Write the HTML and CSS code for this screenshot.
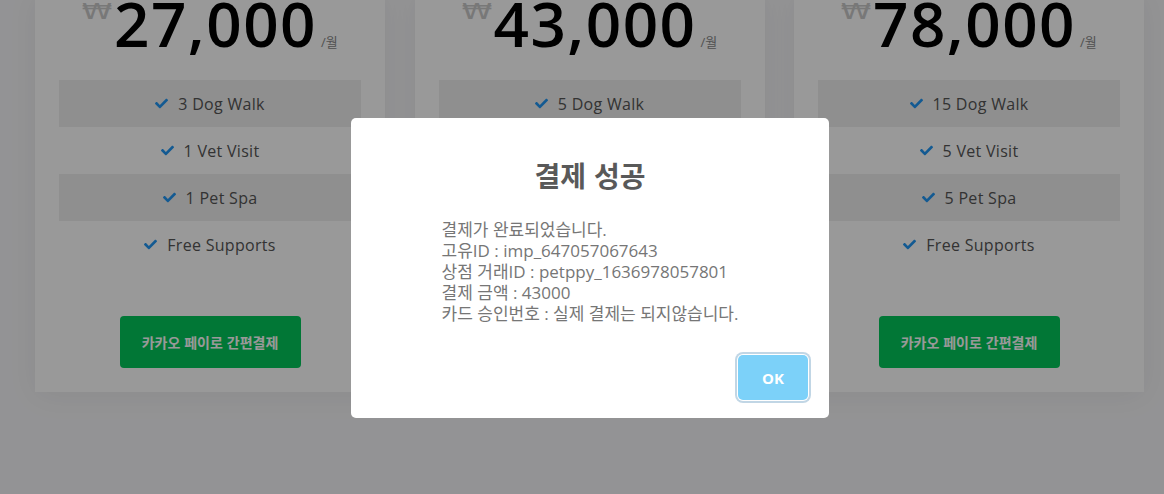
FILE: index.html
```html
<!DOCTYPE html>
<html lang="ko">
<head>
<meta charset="utf-8">
<title>요금제</title>
<link rel="stylesheet" href="styles.css">
</head>
<body>
<main class="pricing">
  <section class="card">
    <div class="price"><span class="won">₩</span><span class="amount">27,000</span><span class="per">/월</span></div>
    <ul class="features">
      <li><svg class="check" viewBox="0 0 512 512"><path d="M173.9 439.4l-166.4-166.4c-10-10-10-26.2 0-36.2l36.2-36.2c10-10 26.2-10 36.2 0L192 312.7 432.1 72.6c10-10 26.2-10 36.2 0l36.2 36.2c10 10 10 26.2 0 36.2l-294.4 294.4c-10 10-26.2 10-36.2 0z"/></svg>3 Dog Walk</li>
      <li><svg class="check" viewBox="0 0 512 512"><path d="M173.9 439.4l-166.4-166.4c-10-10-10-26.2 0-36.2l36.2-36.2c10-10 26.2-10 36.2 0L192 312.7 432.1 72.6c10-10 26.2-10 36.2 0l36.2 36.2c10 10 10 26.2 0 36.2l-294.4 294.4c-10 10-26.2 10-36.2 0z"/></svg>1 Vet Visit</li>
      <li><svg class="check" viewBox="0 0 512 512"><path d="M173.9 439.4l-166.4-166.4c-10-10-10-26.2 0-36.2l36.2-36.2c10-10 26.2-10 36.2 0L192 312.7 432.1 72.6c10-10 26.2-10 36.2 0l36.2 36.2c10 10 10 26.2 0 36.2l-294.4 294.4c-10 10-26.2 10-36.2 0z"/></svg>1 Pet Spa</li>
      <li><svg class="check" viewBox="0 0 512 512"><path d="M173.9 439.4l-166.4-166.4c-10-10-10-26.2 0-36.2l36.2-36.2c10-10 26.2-10 36.2 0L192 312.7 432.1 72.6c10-10 26.2-10 36.2 0l36.2 36.2c10 10 10 26.2 0 36.2l-294.4 294.4c-10 10-26.2 10-36.2 0z"/></svg>Free Supports</li>
    </ul>
    <div class="cta"><button class="kakao">카카오 페이로 간편결제</button></div>
  </section>
  <section class="card">
    <div class="price"><span class="won">₩</span><span class="amount">43,000</span><span class="per">/월</span></div>
    <ul class="features">
      <li><svg class="check" viewBox="0 0 512 512"><path d="M173.9 439.4l-166.4-166.4c-10-10-10-26.2 0-36.2l36.2-36.2c10-10 26.2-10 36.2 0L192 312.7 432.1 72.6c10-10 26.2-10 36.2 0l36.2 36.2c10 10 10 26.2 0 36.2l-294.4 294.4c-10 10-26.2 10-36.2 0z"/></svg>5 Dog Walk</li>
      <li><svg class="check" viewBox="0 0 512 512"><path d="M173.9 439.4l-166.4-166.4c-10-10-10-26.2 0-36.2l36.2-36.2c10-10 26.2-10 36.2 0L192 312.7 432.1 72.6c10-10 26.2-10 36.2 0l36.2 36.2c10 10 10 26.2 0 36.2l-294.4 294.4c-10 10-26.2 10-36.2 0z"/></svg>3 Vet Visit</li>
      <li><svg class="check" viewBox="0 0 512 512"><path d="M173.9 439.4l-166.4-166.4c-10-10-10-26.2 0-36.2l36.2-36.2c10-10 26.2-10 36.2 0L192 312.7 432.1 72.6c10-10 26.2-10 36.2 0l36.2 36.2c10 10 10 26.2 0 36.2l-294.4 294.4c-10 10-26.2 10-36.2 0z"/></svg>3 Pet Spa</li>
      <li><svg class="check" viewBox="0 0 512 512"><path d="M173.9 439.4l-166.4-166.4c-10-10-10-26.2 0-36.2l36.2-36.2c10-10 26.2-10 36.2 0L192 312.7 432.1 72.6c10-10 26.2-10 36.2 0l36.2 36.2c10 10 10 26.2 0 36.2l-294.4 294.4c-10 10-26.2 10-36.2 0z"/></svg>Free Supports</li>
    </ul>
    <div class="cta"><button class="kakao">카카오 페이로 간편결제</button></div>
  </section>
  <section class="card">
    <div class="price"><span class="won">₩</span><span class="amount">78,000</span><span class="per">/월</span></div>
    <ul class="features">
      <li><svg class="check" viewBox="0 0 512 512"><path d="M173.9 439.4l-166.4-166.4c-10-10-10-26.2 0-36.2l36.2-36.2c10-10 26.2-10 36.2 0L192 312.7 432.1 72.6c10-10 26.2-10 36.2 0l36.2 36.2c10 10 10 26.2 0 36.2l-294.4 294.4c-10 10-26.2 10-36.2 0z"/></svg>15 Dog Walk</li>
      <li><svg class="check" viewBox="0 0 512 512"><path d="M173.9 439.4l-166.4-166.4c-10-10-10-26.2 0-36.2l36.2-36.2c10-10 26.2-10 36.2 0L192 312.7 432.1 72.6c10-10 26.2-10 36.2 0l36.2 36.2c10 10 10 26.2 0 36.2l-294.4 294.4c-10 10-26.2 10-36.2 0z"/></svg>5 Vet Visit</li>
      <li><svg class="check" viewBox="0 0 512 512"><path d="M173.9 439.4l-166.4-166.4c-10-10-10-26.2 0-36.2l36.2-36.2c10-10 26.2-10 36.2 0L192 312.7 432.1 72.6c10-10 26.2-10 36.2 0l36.2 36.2c10 10 10 26.2 0 36.2l-294.4 294.4c-10 10-26.2 10-36.2 0z"/></svg>5 Pet Spa</li>
      <li><svg class="check" viewBox="0 0 512 512"><path d="M173.9 439.4l-166.4-166.4c-10-10-10-26.2 0-36.2l36.2-36.2c10-10 26.2-10 36.2 0L192 312.7 432.1 72.6c10-10 26.2-10 36.2 0l36.2 36.2c10 10 10 26.2 0 36.2l-294.4 294.4c-10 10-26.2 10-36.2 0z"/></svg>Free Supports</li>
    </ul>
    <div class="cta"><button class="kakao">카카오 페이로 간편결제</button></div>
  </section>
</main>

<div class="overlay">
  <div class="modal" role="dialog">
    <h2 class="modal-title">결제 성공</h2>
    <div class="modal-text-wrap">
      <div class="modal-text">결제가 완료되었습니다.<br>고유ID : imp_647057067643<br>상점 거래ID : petppy_1636978057801<br>결제 금액 : 43000<br>카드 승인번호 : 실제 결제는 되지않습니다.</div>
    </div>
    <div class="modal-footer"><button class="ok-btn">OK</button></div>
  </div>
</div>
</body>
</html>
```
FILE: styles.css
```css
* { box-sizing: border-box; }
html, body { margin: 0; padding: 0; }
body {
  background: #f6f6f8;
  font-family: "Open Sans", "Noto Sans CJK KR", sans-serif;
  color: #555;
  height: 494px;
  overflow: hidden;
}

.pricing {
  display: grid;
  grid-template-columns: repeat(3, 350px);
  column-gap: 29.5px;
  padding-left: 35px;
  margin-top: -8px;
}

.card {
  background: #fff;
  padding: 0 24px 24px;
  box-shadow: 0 4px 30px rgba(0, 0, 0, 0.06);
}

.price {
  height: 88px;
  display: flex;
  justify-content: center;
  align-items: baseline;
}
.won {
  align-self: flex-start;
  margin-top: 9px;
  margin-left: 4px;
  margin-right: 6px;
  font-family: "DejaVu Sans", sans-serif;
  font-size: 22px;
  line-height: 22px;
  color: #c8c8c8;
  transform: scaleX(1.4);
}
.amount {
  font-size: 62px;
  line-height: 62px;
  font-weight: 600;
  color: #000;
  letter-spacing: 1.5px;
}
.per {
  margin-left: 4px;
  font-size: 13px;
  color: #888;
}

.features {
  list-style: none;
  margin: 0;
  padding: 0;
}
.features li {
  height: 47px;
  display: flex;
  align-items: center;
  justify-content: center;
  gap: 10px;
  font-size: 16px;
  letter-spacing: 0.3px;
  color: #555;
}
.features li:nth-child(odd) { background: #eee; }
.check {
  width: 13px;
  height: 13px;
  fill: #2196f3;
}

.cta {
  margin-top: 48px;
  display: flex;
  justify-content: center;
}
.kakao {
  width: 181px;
  height: 52px;
  border: 0;
  border-radius: 4px;
  background: #03c75a;
  color: #fff;
  font-family: "Noto Sans CJK KR", sans-serif;
  font-weight: 700;
  font-size: 14px;
}

.overlay {
  position: fixed;
  inset: 0;
  background: rgba(0, 0, 0, 0.4);
  display: flex;
  align-items: center;
  justify-content: center;
  padding: 42px 0 0 16px;
}
.modal {
  width: 478px;
  height: 300px;
  background: #fff;
  border-radius: 5px;
  display: flex;
  flex-direction: column;
}
.modal-title {
  margin: 39px 0 0;
  height: 36px;
  line-height: 36px;
  text-align: center;
  font-family: "Noto Sans CJK KR", sans-serif;
  font-size: 28px;
  font-weight: 700;
  color: #595959;
}
.modal-text-wrap {
  margin-top: 26px;
  text-align: center;
}
.modal-text {
  display: inline-block;
  text-align: left;
  font-size: 17px;
  line-height: 21px;
  color: #767676;
}
.modal-footer {
  margin-top: auto;
  padding: 0 21px 18px 0;
  text-align: right;
}
.ok-btn {
  width: 70px;
  height: 45px;
  border: 0;
  border-radius: 5px;
  background: #7cd1f9;
  color: #fff;
  font-family: "Open Sans", sans-serif;
  font-weight: 700;
  font-size: 15px;
  box-shadow: 0 0 0 1px #fff, 0 0 0 3px rgba(43, 114, 165, 0.29);
}
```
